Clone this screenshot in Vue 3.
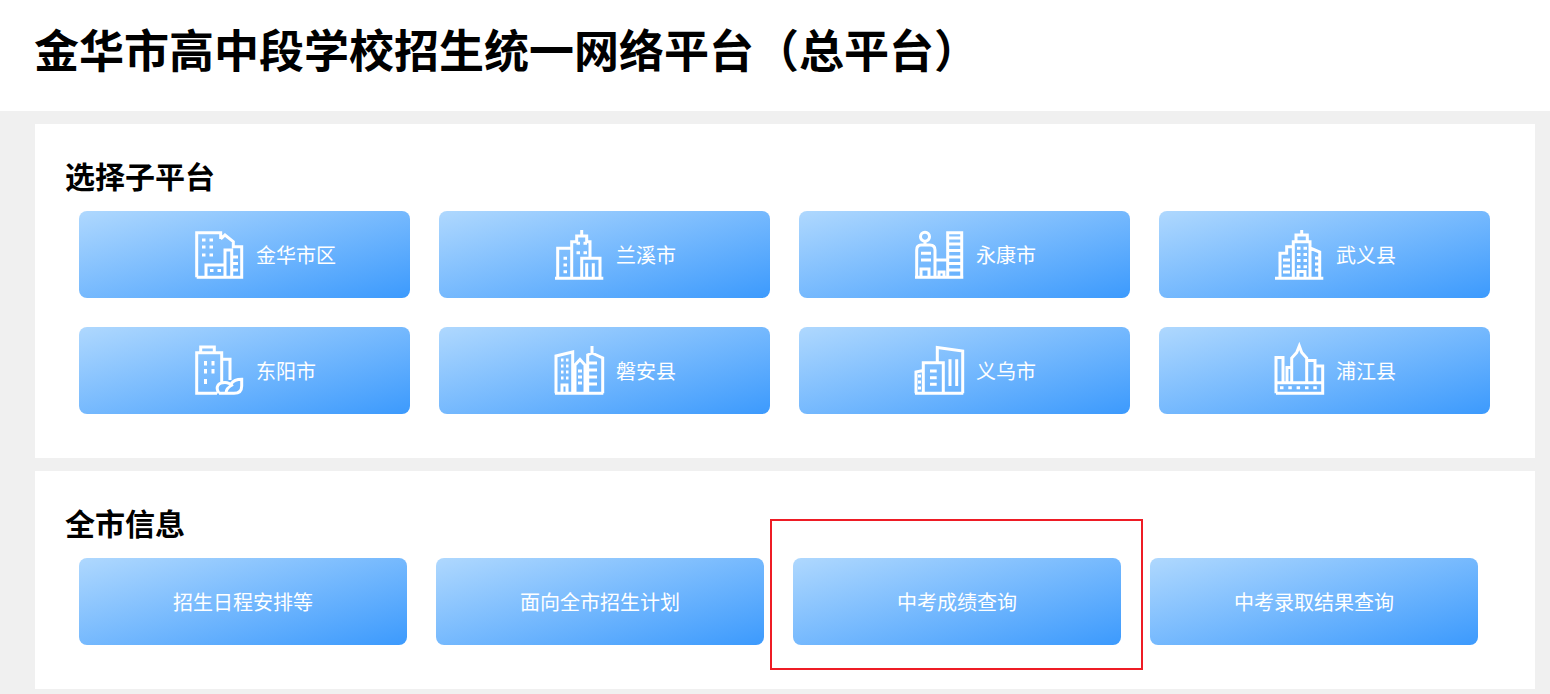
<template>
  <div class="page">
    <header class="top">
      <h1>金华市高中段学校招生统一网络平台（总平台）</h1>
    </header>

    <section class="card">
      <h2>选择子平台</h2>
      <div class="grid cities">
        <a v-for="city in cities" :key="city.name" class="tile city">
          <svg class="icon" viewBox="0 0 50 50" width="50" height="50">
            <path :d="city.icon" />
          </svg>
          <span>{{ city.name }}</span>
        </a>
      </div>
    </section>

    <section class="card">
      <h2>全市信息</h2>
      <div class="grid infos">
        <a v-for="item in infos" :key="item" class="tile info">{{ item }}</a>
      </div>
      <div class="mark"></div>
    </section>
  </div>
</template>

<script setup>
const cities = [
  {
    name: '金华市区',
    icon: 'M11 47.3V35H30V47.3M1.7 47.3V2.7H25.7V9M25.7 9L30 5L38.3 11.7V16.7H46.7V47.3H1.7M30 35V20H36.7V47M36.7 27H43M36.7 33.5H43M36.7 40H43M7 10H10.5M14.5 10H18M7 17H10.5M14.5 17H18M7 25H10.5M14.5 25H18M15 40.5H18.5M22.5 40.5H26'
  },
  {
    name: '兰溪市',
    icon: 'M0 48.3H48.3M2.7 48.3V18.3H16.7M16.7 48.3V11.7H21.7V6H31.7V11.7H35V28.3M26.7 6V0M26.7 48.3V28.3H45V48.3M31.7 48V33.3M38.3 48V33.3M8.5 28.3H12M8.5 35H12M8.5 41.7H12M21.5 13.3H25M28.5 13.3H32M21.5 22.7H25M28.5 22.7H32'
  },
  {
    name: '永康市',
    icon: 'M0 47.3H48.3M1.7 47.3V20Q1.7 15 6 15H15Q20 15 20 20V47.3M10 15V11M10 2.2A4.5 4.5 0 1 0 10 11.2A4.5 4.5 0 1 0 10 2.2M6 23.3H16M6 30H16M6 47V39H14V47M20 30H32.7M32.7 47.3V2.7H46.7V47.3M33 8H46M33 14H46M33 20.5H46M33 27H46M33 33.5H46M33 40H46M24 47V42H29V47'
  },
  {
    name: '武义县',
    icon: 'M0 48.3H48.3M5 48.3V23.3H11.7V16.7H18.3M18.3 48.3V11.7H35V48.3M21 11.7V5H32.3V11.7M26.7 5V0M35 18L44.7 22V48.3M40 28H45M40 34H45M40 40H45M8 30H15M8 36H15M8 42H15M22 18.3H25.5M28.5 18.3H32M22 24.5H25.5M28.5 24.5H32M22 30.5H25.5M28.5 30.5H32M22 36.7H25.5M28.5 36.7H32M23 48V41.5H30V48'
  },
  {
    name: '东阳市',
    icon: 'M5.7 6.7V1H19.3V6.7M22 47.3H1.7V6.7H26.7V36M26.7 13.3H35V34M24 47.3C20 41 23 36.5 30 36.5C33 36.5 35 38 36 38C38 35 42 33.3 46.7 33.3V40Q46.7 47.3 39 47.3H24M31 47Q31 42 38 38.5M10.5 15V19.5M18 15V19.5M10.5 23V27.5M18 23V27.5M10.5 33V38'
  },
  {
    name: '磐安县',
    icon: 'M0 47.3H48.3M1 47.3V10L17.7 6V47.3M20 47.3V19L25 13.5L30 19V47.3M32.7 47.3V9L37 7V0M37 7L47.7 12V47.3M6 14H8.5M11 14H13.5M6 20H8.5M11 20H13.5M6 26H8.5M11 26H13.5M6 32H8.5M11 32H13.5M7 47V39H12V47M23 25H27M23 31H27M23 37H27M33 17H42M33 24H42M33 31H42M33 38H42'
  },
  {
    name: '义乌市',
    icon: 'M0 47.3H48.3M22.3 16V1.5L47.7 5V47.3M35 13.3V40M41.7 13.3V40M8.3 47.3V16.7H28.3V47.3M1 47.3V26L8.3 24.5M3 30H6M3 36H6M3 42H6M15 25H21.7M15 31.7H21.7M15 38.3H21.7'
  },
  {
    name: '浦江县',
    icon: 'M1 47.3V11.5H8V36.7M1 36.7H47.7V47.3H1M12 36.7V21.5H16.7M16.7 36.7V12L21.7 6.5L24.3 0L26.7 6.5L31.7 12V36.7M31.7 14.5H40V36.7M40 20H47.7V47.3M5 41.8H8.5M13.3 41.8H16.8M21.6 41.8H25.1M30 41.8H33.5M38.3 41.8H41.8'
  }
]

const infos = ['招生日程安排等', '面向全市招生计划', '中考成绩查询', '中考录取结果查询']
</script>

<style>
html, body { background: #f0f0f0; }
</style>

<style scoped>
.page { width: 1550px; height: 694px; overflow: hidden; background: #f0f0f0; font-family: "Noto Sans CJK SC", "Liberation Sans", sans-serif; }
.top { height: 111px; padding-left: 34px; background: #fff; box-sizing: border-box; }
h1 { margin: 0; font-size: 45px; line-height: 97px; font-weight: 700; color: #000; }
.card { position: relative; width: 1500px; margin: 13px 0 0 35px; padding: 30px 0 44px 30px; background: #fff; box-sizing: border-box; }
h2 { margin: 0 0 15px; font-size: 30px; line-height: 42px; font-weight: 700; color: #000; }
.grid { display: grid; column-gap: 29px; row-gap: 29px; margin-left: 14px; }
.cities { grid-template-columns: repeat(4, 331px); }
.infos { grid-template-columns: repeat(4, 328px); }
.tile { display: flex; align-items: center; height: 87px; border-radius: 8px; color: #fff; font-size: 20px; background: linear-gradient(to bottom right, #afd8fe, #3c9afd); }
.city { padding-left: 116px; gap: 11px; }
.info { justify-content: center; }
.icon { flex: none; overflow: visible; }
.icon path { fill: none; stroke: #fff; stroke-width: 3; }
.mark { position: absolute; left: 735px; top: 48px; width: 373px; height: 151px; border: 2px solid #ee1c25; box-sizing: border-box; pointer-events: none; }
</style>
